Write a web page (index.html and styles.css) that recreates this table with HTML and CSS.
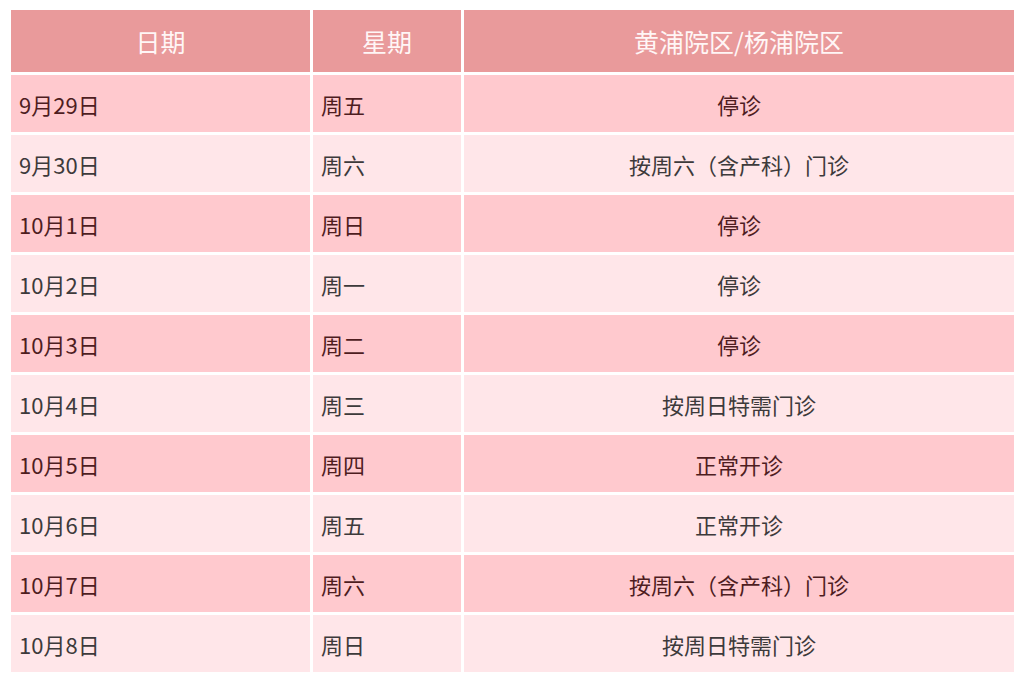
FILE: index.html
```html
<!DOCTYPE html>
<html lang="zh-CN">
<head>
<meta charset="utf-8">
<title>节假日门诊安排</title>
<link rel="stylesheet" href="styles.css">
</head>
<body>
<div class="schedule" role="table">
  <div class="cell head" role="columnheader">日期</div>
  <div class="cell head" role="columnheader">星期</div>
  <div class="cell head" role="columnheader">黄浦院区/杨浦院区</div>

  <div class="cell odd">9月29日</div><div class="cell odd">周五</div><div class="cell odd center">停诊</div>
  <div class="cell even">9月30日</div><div class="cell even">周六</div><div class="cell even center">按周六（含产科）门诊</div>
  <div class="cell odd">10月1日</div><div class="cell odd">周日</div><div class="cell odd center">停诊</div>
  <div class="cell even">10月2日</div><div class="cell even">周一</div><div class="cell even center">停诊</div>
  <div class="cell odd">10月3日</div><div class="cell odd">周二</div><div class="cell odd center">停诊</div>
  <div class="cell even">10月4日</div><div class="cell even">周三</div><div class="cell even center">按周日特需门诊</div>
  <div class="cell odd">10月5日</div><div class="cell odd">周四</div><div class="cell odd center">正常开诊</div>
  <div class="cell even">10月6日</div><div class="cell even">周五</div><div class="cell even center">正常开诊</div>
  <div class="cell odd">10月7日</div><div class="cell odd">周六</div><div class="cell odd center">按周六（含产科）门诊</div>
  <div class="cell even">10月8日</div><div class="cell even">周日</div><div class="cell even center">按周日特需门诊</div>
</div>
</body>
</html>
```
FILE: styles.css
```css
html, body {
  margin: 0;
  padding: 0;
  background: #ffffff;
}
body {
  font-family: "Noto Sans CJK SC", "Noto Sans", sans-serif;
}
.schedule {
  display: grid;
  grid-template-columns: 299px 148px 550px;
  grid-template-rows: 62px repeat(10, 57px);
  gap: 3px;
  margin: 10px 0 0 11px;
}
.cell {
  display: flex;
  align-items: center;
  padding: 0 0 0 8px;
  font-size: 22px;
  font-weight: 400;
  line-height: 1;
}
.head {
  justify-content: center;
  padding: 0;
  background: #e99a9b;
  color: #fff6f6;
  font-size: 25px;
}
.odd {
  background: #ffc9ce;
  color: #4e1d1f;
}
.even {
  background: #ffe6e9;
  color: #3d3a3b;
}
.center {
  justify-content: center;
  padding: 0;
}
```
